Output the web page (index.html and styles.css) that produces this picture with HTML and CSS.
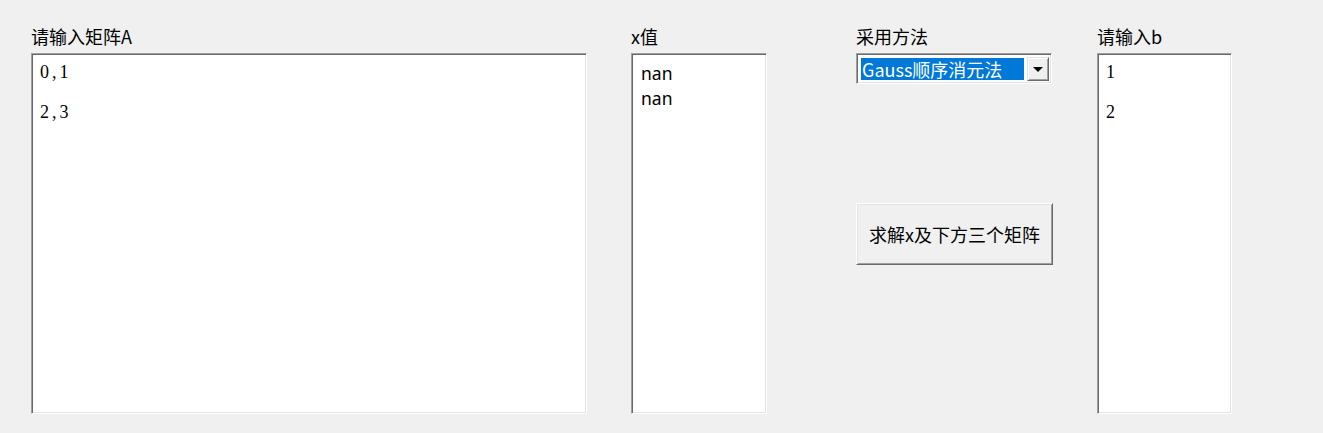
FILE: index.html
```html
<!DOCTYPE html>
<html lang="zh">
<head>
<meta charset="utf-8">
<link rel="stylesheet" href="styles.css">
</head>
<body>
<div class="form">
  <div class="col col-a">
    <div class="label">请输入矩阵A</div>
    <div class="edit serif tall">
      <div class="line">0,1</div>
      <div class="line">&nbsp;</div>
      <div class="line">2,3</div>
    </div>
  </div>
  <div class="col col-x">
    <div class="label">x值</div>
    <div class="edit sans tall">
      <div class="line-s">nan</div>
      <div class="line-s">nan</div>
    </div>
  </div>
  <div class="col col-m">
    <div class="label">采用方法</div>
    <div class="combo">
      <div class="combo-sel">Gauss顺序消元法</div>
      <div class="combo-btn"><span class="tri"></span></div>
    </div>
    <div class="button">求解x及下方三个矩阵</div>
  </div>
  <div class="col col-b">
    <div class="label">请输入b</div>
    <div class="edit serif tall">
      <div class="line">1</div>
      <div class="line">&nbsp;</div>
      <div class="line">2</div>
    </div>
  </div>
</div>
</body>
</html>
```

FILE: styles.css
```css
html, body {
  margin: 0;
  padding: 0;
  background: #f0f0f0;
  width: 1323px;
  height: 433px;
  overflow: hidden;
}
.form {
  display: flex;
  padding: 26px 0 0 31px;
  font-family: "Noto Sans CJK SC", "Noto Sans", sans-serif;
  color: #000;
}
.col {
  display: flex;
  flex-direction: column;
}
.col-a { width: 556px; margin-right: 44px; }
.col-x { width: 136px; margin-right: 89px; }
.col-m { width: 197px; margin-right: 44px; }
.col-b { width: 135px; }
.label {
  font-size: 18px;
  line-height: 20px;
  height: 20px;
  margin-bottom: 7px;
  white-space: nowrap;
}
.edit {
  box-sizing: border-box;
  background: #fff;
  border-style: solid;
  border-width: 1px;
  border-color: #a0a0a0 #ffffff #ffffff #a0a0a0;
  height: 361px;
}
.edit.tall {
  box-shadow: inset 1px 1px 0 #696969, inset -1px -1px 0 #e3e3e3;
}
.serif {
  font-family: "Liberation Serif", "Noto Serif CJK SC", serif;
  font-size: 18px;
  letter-spacing: 3px;
  padding: 8px 0 0 8px;
}
.line { line-height: 20px; height: 20px; }
.sans {
  font-family: "Noto Sans", "Noto Sans CJK SC", sans-serif;
  font-size: 17.5px;
  padding: 7px 0 0 9px;
}
.line-s { line-height: 25px; height: 25px; }
.combo {
  box-sizing: border-box;
  width: 196px;
  height: 31px;
  background: #fff;
  border-style: solid;
  border-width: 1px;
  border-color: #a0a0a0 #ffffff #ffffff #a0a0a0;
  box-shadow: inset 1px 1px 0 #696969, inset -1px -1px 0 #e3e3e3;
  display: flex;
  align-items: flex-start;
  padding: 4px 2px 0 4px;
}
.combo-sel {
  width: 163px;
  height: 22px;
  background: #0078d7;
  color: #fff;
  font-size: 18px;
  line-height: 22px;
  padding-left: 1px;
  box-sizing: border-box;
  white-space: nowrap;
}
.combo-btn {
  box-sizing: border-box;
  margin-left: 3px;
  margin-top: -1px;
  width: 22px;
  height: 24px;
  background: #f0f0f0;
  border-style: solid;
  border-width: 1px;
  border-color: #e3e3e3 #696969 #696969 #e3e3e3;
  box-shadow: inset 1px 1px 0 #ffffff, inset -1px -1px 0 #a0a0a0;
  display: flex;
  align-items: center;
  justify-content: center;
}
.tri {
  width: 0;
  height: 0;
  border-left: 5px solid transparent;
  border-right: 5px solid transparent;
  border-top: 5px solid #000;
  margin-top: 1px;
}
.button {
  box-sizing: border-box;
  margin-top: 119px;
  width: 197px;
  height: 62px;
  background: #f0f0f0;
  border-style: solid;
  border-width: 1px;
  border-color: #ffffff #696969 #696969 #ffffff;
  box-shadow: inset 1px 1px 0 #e3e3e3, inset -1px -1px 0 #a0a0a0;
  display: flex;
  align-items: center;
  justify-content: center;
  font-size: 18px;
  white-space: nowrap;
}
```
